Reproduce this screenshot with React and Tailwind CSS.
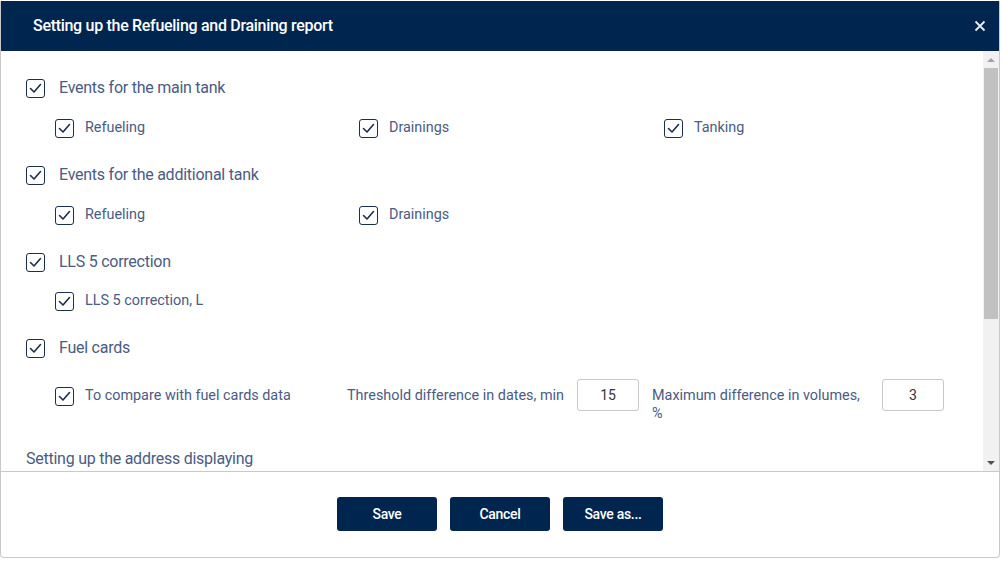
import React from "react";

const F = { fontFamily: "Roboto, 'Liberation Sans', sans-serif" };

function Box() {
  return (
    <span className="inline-flex h-[19px] w-[19px] shrink-0 items-center justify-center rounded-[3px] border-[1.5px] border-[#1c2d4d] bg-white">
      <svg width="13" height="11" viewBox="0 0 13 11" fill="none">
        <path d="M1.5 5.5 L5 9 L11.5 1.5" stroke="#1c2d4d" strokeWidth="1.6" strokeLinecap="round" strokeLinejoin="round" />
      </svg>
    </span>
  );
}

function Main({ children }) {
  return (
    <div className="flex h-[20px] items-center gap-[14px]">
      <Box />
      <span className="text-[16px] tracking-[-0.25px] text-[#4a5b84]">{children}</span>
    </div>
  );
}

function Sub({ children, className = "" }) {
  return (
    <div className={"flex h-[20px] items-center gap-[11px] " + className}>
      <Box />
      <span className="text-[14.4px] text-[#4a5b84]">{children}</span>
    </div>
  );
}

function SubRow({ items }) {
  return (
    <div className="grid grid-cols-[304px_305px_1fr] pl-[29px]">
      {items.map((t) => (
        <Sub key={t}>{t}</Sub>
      ))}
    </div>
  );
}

export default function App() {
  return (
    <div style={F} className="h-[561px] w-[1002px] bg-white pt-px">
      <div className="flex h-[557px] w-[1000px] flex-col overflow-hidden rounded-b-[4px] border-x border-b border-[#c9c9c9]">
        <div className="flex h-[50px] shrink-0 items-center justify-between bg-[#002650] pl-[32px] pr-[13px]">
          <span className="text-[16px] font-medium tracking-[-0.3px] text-white">Setting up the Refueling and Draining report</span>
          <svg width="12" height="12" viewBox="0 0 12 12">
            <path d="M1.5 1.5 L10.5 10.5 M10.5 1.5 L1.5 10.5" stroke="#e8edf3" strokeWidth="1.8" />
          </svg>
        </div>
        <div className="flex h-[421px] shrink-0 border-b border-[#c9c9c9]">
          <div className="flex-1 pl-[25px] pt-[27px]">
            <Main>Events for the main tank</Main>
            <div className="mt-[20px]">
              <SubRow items={["Refueling", "Drainings", "Tanking"]} />
            </div>
            <div className="mt-[27px]">
              <Main>Events for the additional tank</Main>
            </div>
            <div className="mt-[20px]">
              <SubRow items={["Refueling", "Drainings"]} />
            </div>
            <div className="mt-[27px]">
              <Main>LLS 5 correction</Main>
            </div>
            <div className="mt-[19px]">
              <SubRow items={["LLS 5 correction, L"]} />
            </div>
            <div className="mt-[27px]">
              <Main>Fuel cards</Main>
            </div>
            <div className="mt-[21px] flex items-start pl-[29px]">
              <Sub className="mt-[7px] w-[292px]">To compare with fuel cards data</Sub>
              <span className="mt-[8px] w-[230px] text-[14.4px] leading-[18px] text-[#4a5b84]">Threshold difference in dates, min</span>
              <div className="flex h-[32px] w-[62px] items-center justify-center rounded-[3px] border border-[#c8c8c8] text-[14px] text-[#333]">15</div>
              <span className="mt-[8px] ml-[13px] w-[212px] text-[14.4px] leading-[18px] text-[#4a5b84]">
                Maximum difference in volumes, %
              </span>
              <div className="ml-[18px] flex h-[32px] w-[62px] items-center justify-center rounded-[3px] border border-[#c8c8c8] text-[14px] text-[#333]">3</div>
            </div>
            <div className="mt-[24px] text-[16px] tracking-[-0.25px] text-[#4a5b84]">Setting up the address displaying</div>
          </div>
          <div className="flex w-[16px] shrink-0 flex-col items-center bg-[#f1f1f1]">
            <div className="flex h-[17px] items-center justify-center">
              <svg width="8" height="4" viewBox="0 0 8 4"><path d="M0 4 L4 0 L8 4 Z" fill="#a3a3a3" /></svg>
            </div>
            <div className="h-[251px] w-[14px] bg-[#c1c1c1]" />
            <div className="flex-1" />
            <div className="flex h-[17px] items-center justify-center">
              <svg width="8" height="4" viewBox="0 0 8 4"><path d="M0 0 L8 0 L4 4 Z" fill="#505050" /></svg>
            </div>
          </div>
        </div>
        <div className="flex flex-1 items-start justify-center gap-[13px] pt-[25px]">
          {["Save", "Cancel", "Save as..."].map((t) => (
            <button key={t} className="h-[34px] w-[100px] rounded-[3px] bg-[#002650] pt-px text-[14px] font-medium tracking-[-0.3px] text-white">
              {t}
            </button>
          ))}
        </div>
      </div>
    </div>
  );
}
